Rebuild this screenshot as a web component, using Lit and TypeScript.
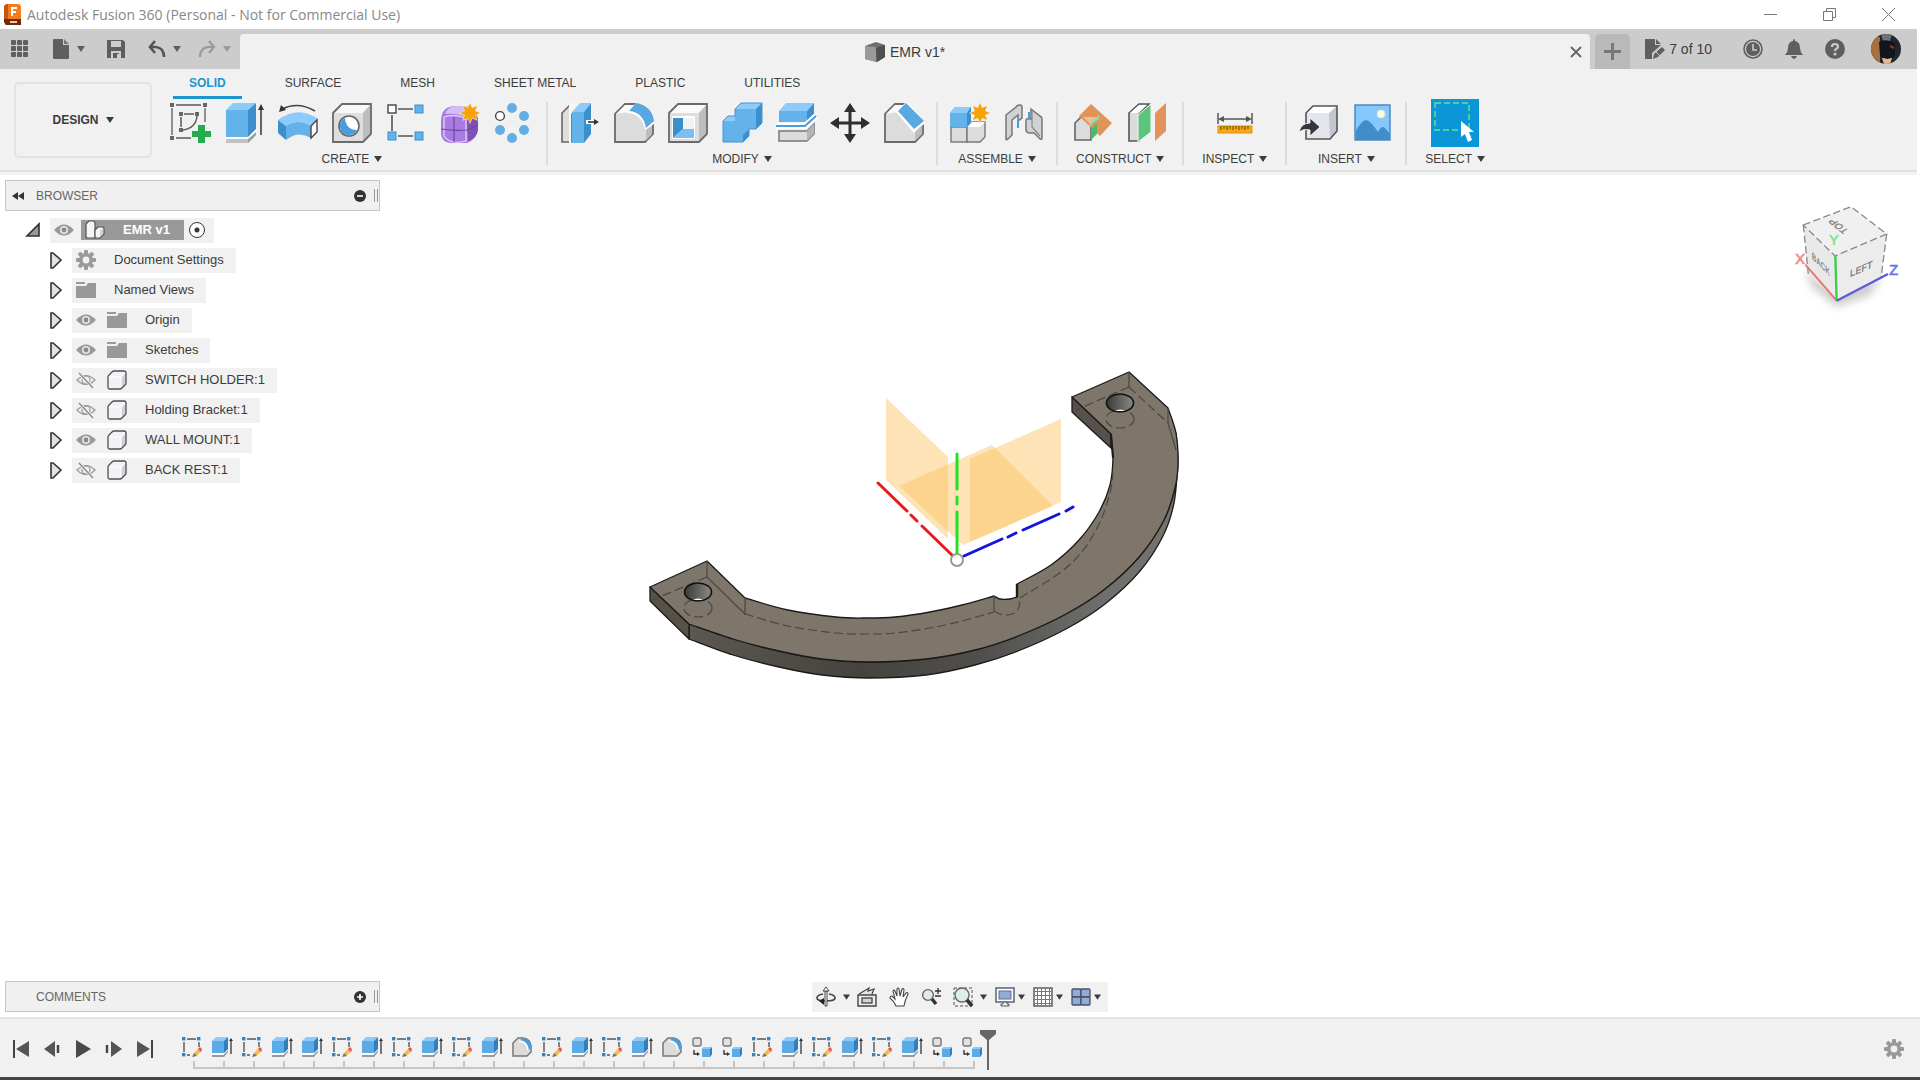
import { LitElement, html, css, svg, nothing } from "lit";
import { customElement, state } from "lit/decorators.js";
import { classMap } from "lit/directives/class-map.js";

type Art = ReturnType<typeof svg>;
type Point = [number, number];

/* ---------- drawing helpers ---------- */

const line = (points: Point[]): string =>
  points.map((p, i) => `${i ? "L" : "M"}${p[0]} ${p[1]}`).join("");

// Smooth curve through every point (Catmull-Rom turned into cubic segments).
const curve = (points: Point[], start = "M"): string => {
  let d = `${start}${points[0][0]} ${points[0][1]}`;
  for (let i = 0; i < points.length - 1; i++) {
    const a = points[i - 1] ?? points[i];
    const b = points[i];
    const c = points[i + 1];
    const e = points[i + 2] ?? c;
    d += `C${b[0] + (c[0] - a[0]) / 6} ${b[1] + (c[1] - a[1]) / 6} ${c[0] - (e[0] - b[0]) / 6} ${c[1] - (e[1] - b[1]) / 6} ${c[0]} ${c[1]}`;
  }
  return d;
};

const burst = (cx: number, cy: number, r: number): string => {
  const pts: Point[] = [];
  for (let i = 0; i < 16; i++) {
    const a = (Math.PI * i) / 8;
    const q = i % 2 ? r * 0.55 : r;
    pts.push([cx + q * Math.sin(a), cy - q * Math.cos(a)]);
  }
  return line(pts) + "Z";
};

const gearArt = svg`
  <g fill="#999">
    ${[0, 45, 90, 135].map((a) => svg`<rect x="8" y="0" width="4" height="20" rx="1" transform="rotate(${a} 10 10)"/>`)}
    <circle cx="10" cy="10" r="7"/>
  </g>
  <circle cx="10" cy="10" r="3.4" fill="#f1f1f1"/>`;

const solidBlock = svg`
  <path d="M1 6L6 1H18L19 2V14L14 19H2L1 18Z" fill="#f2f2f5"/>
  <path d="M14 7L19 2V14L14 19Z" fill="#cfd2da"/>
  <path d="M2 7H14V18M14 7L18 3" fill="none" stroke="#fff" stroke-width="1.2"/>
  <path d="M1 7Q1 6 2 5L5 2Q6 1 7 1H17Q19 1 19 3V13Q19 14 18 15L15 18Q14 19 13 19H3Q1 19 1 17Z" fill="none" stroke="#505050" stroke-width="1.3"/>`;

const sketchNode = (x: number, y: number) => svg`<rect x=${x - 2} y=${y - 2} width="4" height="4" fill="#666"/>`;

/* ---------- ribbon icons, 40 x 40 ---------- */

const tools: Record<string, Art> = {
  sketch: svg`
    <path d="M6 2H31M2 5V32M6 35H21M35 5V19" fill="none" stroke="#5a5a5a" stroke-width="1.3"/>
    <path d="M14 11H24M11 14V24M27 13Q26 25 13 27" fill="none" stroke="#5a5a5a" stroke-width="1.5"/>
    ${[[2, 2], [35, 2], [2, 35], [11, 11], [27, 11], [11, 27]].map((p) => sketchNode(p[0], p[1]))}
    <path d="M28 22H35V28H41V34H35V40H28V34H22V28H28Z" fill="#26ab4f"/>`,
  extrude: svg`
    <path d="M2 36H24L32 28V32L24 40H2Z" fill="#c2c2c2"/>
    <path d="M24 36L32 28V32L24 40Z" fill="#9c9c9c"/>
    <path d="M2 34H24L32 26V29L24 36H2Z" fill="#fff"/>
    <rect x="2" y="7" width="22" height="27" fill="#64b2ea"/>
    <path d="M2 7L9 0H32L24 7Z" fill="#8ccbfb"/>
    <path d="M24 7L32 0V26L24 34Z" fill="#3d8fcc"/>
    <path d="M37 32V4" stroke="#333" stroke-width="1.5"/><path d="M34 7L37 1L40 7Z" fill="#333"/>`,
  revolve: svg`
    <path d="M4 6Q20 -2 37 8" fill="none" stroke="#444" stroke-width="1.6"/><path d="M1 9L3 2L8 7Z" fill="#333"/>
    <path d="M0 17Q20 2 40 16L33 23Q20 15 8 23Z" fill="#8ccbfb"/>
    <path d="M0 17L8 23V37L0 30Z" fill="#3d8fcc"/>
    <path d="M8 23Q20 15 33 23V35Q20 27 8 37Z" fill="#64b2ea"/>
    <path d="M33 23L39 17V29L33 35Z" fill="#fff" stroke="#444" stroke-width="1.4"/>`,
  hole: svg`
    <path d="M1 10L10 1H39V31L31 39H1Z" fill="#dedede"/>
    <path d="M1 10L10 1H39L31 10Z" fill="#f7f7f7"/><path d="M31 10L39 1V31L31 39Z" fill="#bdbdbd"/>
    <path d="M1 10L10 1H39V31L31 39H1Z" fill="none" stroke="#6a6a6a" stroke-width="1.8"/>
    <circle cx="17" cy="23" r="10" fill="#fff" stroke="#666" stroke-width="1.6"/>
    <path d="M13 15A9 9 0 1 0 25 27Q14 27 13 15Z" fill="#4a9ddb"/>`,
  pattern: svg`
    <path d="M6 12V28M12 6H27M12 33H27" stroke="#555" stroke-width="1.6"/>
    <rect x="2" y="2" width="8" height="8" fill="#fff" stroke="#444" stroke-width="1.4"/>
    ${[[29, 2], [2, 29], [29, 29]].map((p) => svg`<rect x=${p[0]} y=${p[1]} width="8" height="8" fill="#64b2ea" stroke="#3d8fcc"/>`)}`,
  form: svg`
    <path d="M1 18Q1 3 16 3H26Q38 5 38 19V27Q37 36 27 40H12Q1 40 1 29Z" fill="#a97be0"/>
    <path d="M5 11Q8 3 17 3H27Q35 5 37 12L28 14Q16 10 5 11Z" fill="#d3bdf3"/>
    <path d="M27 17L38 15V27Q36 36 28 38Z" fill="#7d51b8"/>
    <path d="M4 14Q15 11 26 15V38Q10 42 4 33Z" fill="none" stroke="#e5d8f8" stroke-width="1.2"/>
    <path d="M14 14V39M1 26Q15 28 27 27L38 22" fill="none" stroke="#6d45a5" stroke-width="1.2"/>
    <path d=${burst(30, 10, 11)} fill="#f2f2f2"/><path d=${burst(30, 10, 10)} fill="#f9a208"/>`,
  circular: svg`
    ${[[18, 5], [30, 13], [30, 27], [18, 35], [6, 27]].map((p) => svg`<circle cx=${p[0]} cy=${p[1]} r="5" fill="#62aee4"/>`)}
    <circle cx="6" cy="13" r="4.4" fill="#fff" stroke="#444" stroke-width="1.4"/>`,
  press: svg`
    <path d="M2 10L11 1H16L11 10V39H2Z" fill="#dedede" stroke="#666" stroke-width="1.6"/>
    <path d="M9 0H20L11 11V40H9Z" fill="#f6f6f6"/>
    <rect x="12" y="9" width="12" height="31" fill="#64b2ea"/><path d="M12 9L20 0H31L24 9Z" fill="#8ccbfb"/>
    <path d="M24 9L31 0V31L24 40Z" fill="#3d8fcc"/>
    <path d="M26 19H35" stroke="#fff" stroke-width="4"/><path d="M28 19H35" stroke="#333" stroke-width="1.6"/><path d="M34 16L39 19L34 22Z" fill="#333"/>`,
  fillet: svg`
    <path d="M1 11L11 1H22Q38 4 39 21V31L31 39H1Z" fill="#dcdcdc" stroke="#6a6a6a" stroke-width="1.8"/>
    <path d="M2 11L11 2H20L14 9Z" fill="#fafafa"/>
    <path d="M12 10Q28 10 31 27L40 21Q39 3 22 0Z" fill="#fff"/>
    <path d="M15 8Q29 9 32 25L40 18Q38 3 22 0Z" fill="#58a9e2"/>
    <path d="M32 27L38 23V31L32 38Z" fill="#bdbdbd"/>`,
  shell: svg`
    <path d="M1 10L10 1H39V31L31 39H1Z" fill="#dedede"/>
    <path d="M1 10L10 1H39L31 10Z" fill="#fafafa"/><path d="M31 10L39 1V31L31 39Z" fill="#bdbdbd"/>
    <path d="M1 10L10 1H39V31L31 39H1Z" fill="none" stroke="#6a6a6a" stroke-width="1.8"/>
    <rect x="4" y="13" width="23" height="23" fill="#fff"/>
    <path d="M5 15H15V26L5 35Z" fill="#3d8fcc"/><path d="M5 35L15 26H26V35Z" fill="#7cc0f3"/><path d="M15 15H26V26H15Z" fill="#eef3f7"/>`,
  combine: svg`
    <path d="M1 39V18L6 13H13V6L19 0H40V20L34 26H27V33L21 39Z" fill="#64b2ea"/>
    <path d="M13 6L19 0H40L34 6ZM1 18L6 13H13V18Z" fill="#8ccbfb"/>
    <path d="M34 6L40 0V20L34 26ZM21 32L27 26V33L21 39Z" fill="#3d8fcc"/>
    <path d="M1 39V18L6 13H13V6L19 0H40V20L34 26H27V33L21 39Z" fill="none" stroke="#4595d2" stroke-width="1"/>`,
  split: svg`
    <path d="M3 28H31L38 21V31L31 38H3Z" fill="#dcdcdc" stroke="#777" stroke-width="1.5"/>
    <path d="M31 28L38 21V31L31 38Z" fill="#b5b5b5"/>
    <path d="M3 8H31V19H3Z" fill="#64b2ea"/><path d="M3 8L10 0H38L31 8Z" fill="#8ccbfb"/><path d="M31 8L38 0V12L31 19Z" fill="#3d8fcc"/>
    <path d="M0 23H29L40 13" fill="none" stroke="#fff" stroke-width="6"/><path d="M0 23H29L40 13" fill="none" stroke="#4a9ddb" stroke-width="2"/>`,
  move: svg`
    <path d="M20 7V33M7 20H33" stroke="#2f2f2f" stroke-width="3"/>
    <path d="M20 0L26 9H14ZM20 40L26 31H14ZM0 20L9 14V26ZM40 20L31 14V26Z" fill="#2f2f2f"/>`,
  chamfer: svg`
    <path d="M1 11L11 1H22L39 19V31L31 39H1Z" fill="#dcdcdc" stroke="#6a6a6a" stroke-width="1.8"/>
    <path d="M2 11L11 2H20L13 9Z" fill="#fafafa"/>
    <path d="M12 9L21 0H24L40 18V21L30 30Z" fill="#fff"/>
    <path d="M14 8L22 0L40 18L30 26Z" fill="#58a9e2"/>
    <path d="M31 29L38 22V31L31 38Z" fill="#bdbdbd"/>`,
  component: svg`
    <rect x="1" y="24" width="16" height="15" fill="#dcdcdc" stroke="#777" stroke-width="1.4"/>
    <path d="M17 24L22 19H35V34L30 39H17Z" fill="#dcdcdc" stroke="#777" stroke-width="1.4"/>
    <path d="M17 24L22 19H35L30 24Z" fill="#fff"/>
    <path d="M0 10L5 4H21V19L17 24H0Z" fill="#64b2ea"/><path d="M0 10L5 4H21L17 10Z" fill="#8ccbfb"/><path d="M17 10L21 4V19L17 24Z" fill="#3d8fcc"/>
    <path d=${burst(30, 10, 11)} fill="#f2f2f2"/><path d=${burst(30, 10, 10)} fill="#f9a208"/>`,
  joint: svg`
    <path d="M2 36V12L12 4Q13 2 16 2Q18 2 18 4V15L14 18V12L8 17V32L5 35Q2 38 2 36Z" fill="#d2d2d2" stroke="#777" stroke-width="1.5"/>
    <path d="M27 6L36 13Q38 14 38 16V35Q38 37 36 36L30 30H25Q22 29 22 27V17Q24 14 27 16Z" fill="#d2d2d2" stroke="#777" stroke-width="1.5"/>
    <path d="M28 8V24L36 33" fill="none" stroke="#888" stroke-width="1.2"/>
    <path d="M14 17V25M25 9V17" stroke="#4a9ddb" stroke-width="2"/>`,
  offsetPlane: svg`
    <path d="M2 37V20L9 13H23L18 20V37Z" fill="#dcdcdc" stroke="#666" stroke-width="1.6"/>
    <path d="M18 1L39 20L27 33L6 13Z" fill="#e2935a"/>
    <path d="M10 14H24L18 22Z" fill="#e6c09f"/>
    <path d="M18 26L24 20V31L18 37Z" fill="#48bd6e"/>
    <path d="M16 23L26 13M20 19L26 15" stroke="#8fdca8" stroke-width="2"/>`,
  midPlane: svg`
    <path d="M2 10L12 1H22L12 11V38H2Z" fill="#dcdcdc" stroke="#555" stroke-width="1.6"/>
    <path d="M3 10L12 2H20L11 10Z" fill="#fff"/>
    <path d="M11 12L24 1V29L11 39Z" fill="#5cc47e" stroke="#f6f6f6" stroke-width="1"/>
    <path d="M28 10L39 0V28L28 38Z" fill="#e2935a"/>`,
  measure: svg`
    <path d="M3 10V21M37 10V21M6 16H34" stroke="#555" stroke-width="1.5"/><path d="M3 16L9 13V19ZM37 16L31 13V19Z" fill="#555"/>
    <rect x="3" y="23" width="34" height="7" fill="#f7a713" stroke="#e0930b"/>
    <path d="M6 23V27M9 23V26M12 23V27M15 23V26M18 23V27M21 23V26M24 23V27M27 23V26M30 23V27M33 23V26" stroke="#65460a"/>`,
  derive: svg`
    <path d="M7 10L14 3H38V28L31 36H7Z" fill="#e4e5ea"/><path d="M7 10L14 3H38L30 10Z" fill="#fff"/><path d="M30 10L38 3V28L31 36Z" fill="#c3c6cf"/>
    <path d="M7 10L14 3H38V28L31 36H7Z" fill="none" stroke="#555" stroke-width="1.6"/>
    <path d="M0 29Q2 20 11 20V15L21 24L11 33V27Q5 25 0 29Z" fill="#333740" stroke="#fff" stroke-width="0.8"/>`,
  canvas: svg`
    <rect x="2" y="2" width="35" height="35" fill="#86c8fb" stroke="#3f86bb" stroke-width="1.4"/>
    <path d="M3 28Q8 18 13 17Q17 17 25 29Q29 22 32 25L37 31V37H3Z" fill="#3f8ecb"/>
    <circle cx="28" cy="11" r="4" fill="#fbfbe6" stroke="#e1ecc2"/>`,
};

/* ---------- 20 x 20 icons ---------- */

const small: Record<string, Art> = {
  apps: svg`${[1, 7, 13].map((y) => [1, 7, 13].map((x) => svg`<rect x=${x} y=${y} width="5" height="5" rx="1" fill="#5f5f5f"/>`))}`,
  file: svg`<path d="M2 1Q2 0 3 0H12V6H18V19Q18 20 17 20H3Q2 20 2 19Z" fill="#5f5f5f"/><path d="M13 0L18 5H13Z" fill="#777"/>`,
  save: svg`<path d="M1 1H17L19 3V19H1Z" fill="#5f5f5f"/><path d="M5 2H15V8H5Z" fill="#ccc"/><path d="M6 2H9V6H6ZM5 12H15V19H5Z" fill="#ccc"/><path d="M7 14H13V19H7Z" fill="#5f5f5f"/><path d="M11 15H13V19H11Z" fill="#ccc"/>`,
  undo: svg`<path d="M8 2L3 8L8 14M3 8H9Q17 9 17 18" fill="none" stroke="#555" stroke-width="2.6"/>`,
  redo: svg`<path d="M12 2L17 8L12 14M17 8H11Q3 9 3 18" fill="none" stroke="#999" stroke-width="2.2"/>`,
  box: svg`<path d="M0 4L11 0L20 3V15L12 20L0 17Z" fill="#6d6d6d"/><path d="M0 4L11 5V20L0 17Z" fill="#999"/><path d="M11 6L20 3V15L12 20Z" fill="#4f4f4f"/>`,
  jobs: svg`<path d="M0 0H10V6H16L7 14V20H0Z" fill="#5f5f5f"/><path d="M11 0L16 5H11Z" fill="#5f5f5f"/><path d="M8 20L9 15L17 8L20 11L13 18Z" fill="#5f5f5f"/><path d="M11 13L15 17" stroke="#ccc"/>`,
  clock: svg`<circle cx="10" cy="10" r="9" fill="none" stroke="#5f5f5f" stroke-width="1.6"/><circle cx="10" cy="10" r="7" fill="#5f5f5f"/><path d="M10 5V11H14" fill="none" stroke="#ccc" stroke-width="1.6"/>`,
  bell: svg`<path d="M10 0Q11 0 11 2Q16 3 16 9Q16 13 19 16H1Q4 13 4 9Q4 3 9 2Q9 0 10 0Z" fill="#5f5f5f"/><path d="M7 17H13Q12 20 10 20Q8 20 7 17Z" fill="#5f5f5f"/>`,
  help: svg`<circle cx="10" cy="10" r="10" fill="#5f5f5f"/><path d="M7 8Q7 5 10 5Q13 5 13 8Q13 9 11 10Q10 11 10 12" fill="none" stroke="#ccc" stroke-width="2.2"/><circle cx="10" cy="15" r="1.5" fill="#ccc"/>`,
  eye: svg`<path d="M0 10Q10 -1 20 10Q10 21 0 10Z" fill="#999"/><circle cx="10" cy="10" r="4" fill="#e6e6e6"/><circle cx="10" cy="10" r="2.4" fill="#8a8a8a"/>`,
  eyeOff: svg`<path d="M1 10Q10 1 19 10Q10 19 1 10Z" fill="none" stroke="#999" stroke-width="1.2"/><circle cx="10" cy="10" r="4" fill="none" stroke="#999" stroke-width="1.2"/><path d="M3 3L17 18" stroke="#f1f1f1" stroke-width="3"/><path d="M3 3L17 18" stroke="#888" stroke-width="1.3"/>`,
  folder: svg`<path d="M0 2H9V4H0ZM0 6H10L12 3H20V18H0Z" fill="#999"/>`,
  gear: gearArt,
  block: solidBlock,
  assembly: svg`<path d="M1 4L4 1H9L10 3V18H2L1 17Z" fill="#f5f5f7" stroke="#555" stroke-width="1.2"/><path d="M10 10L13 7H18L19 8V14L15 18H10Z" fill="#f5f5f7" stroke="#555" stroke-width="1.2"/><path d="M15 11L18 8V14L15 17Z" fill="#cfd2da"/>`,
  toStart: svg`<path d="M3 1V19" stroke="#444" stroke-width="2"/><path d="M18 2V18L5 10Z" fill="#555"/>`,
  back: svg`<path d="M13 2V18L2 10Z" fill="#555"/><path d="M16 6V14" stroke="#444" stroke-width="2.4"/>`,
  play: svg`<path d="M3 1V19L18 10Z" fill="#4a4a4a"/>`,
  forward: svg`<path d="M7 2V18L18 10Z" fill="#555"/><path d="M3 6V14" stroke="#444" stroke-width="2.4"/>`,
  toEnd: svg`<path d="M17 1V19" stroke="#444" stroke-width="2"/><path d="M2 2V18L15 10Z" fill="#555"/>`,
  tSketch: svg`
    <path d="M5 2H14M2 5V15M17 5V10M5 18H8" stroke="#555" stroke-width="1.4"/>
    ${[[0, 0], [15, 0], [0, 16]].map((p) => svg`<rect x=${p[0]} y=${p[1]} width="3.4" height="3.4" fill="#2e86c8"/>`)}
    <path d="M12 16L17 11L20 14L14 19Z" fill="#f5bb4b"/><path d="M16 12L18 10L20 12L19 15Z" fill="#ef5350"/><path d="M10 20L12 16L15 19Z" fill="#777"/>`,
  tExtrude: svg`
    <path d="M0 18H11L16 13V15L12 20H0Z" fill="#999"/><path d="M0 16H11L16 11V13L11 18H0Z" fill="#fff"/>
    <rect x="0" y="4" width="12" height="12" fill="#5aabe6"/><path d="M0 4L4 0H16L12 4Z" fill="#8ccbfb"/><path d="M12 4L16 0V12L12 16Z" fill="#2f7fbd"/>
    <path d="M19 17V3" stroke="#333" stroke-width="1.3"/><path d="M17 4L19 1L21 4Z" fill="#333"/>`,
  tFillet: svg`
    <path d="M1 6L6 1H11Q19 2 19 10V15L15 19H1Z" fill="#dcdcdc" stroke="#777" stroke-width="1.5"/>
    <path d="M7 4Q15 5 16 13" fill="none" stroke="#fff" stroke-width="1.4"/>
    <path d="M8 3Q16 4 17 13L20 10Q19 2 11 1Z" fill="#4a9ddb"/>`,
  tComponent: svg`
    <rect x="1" y="1" width="8" height="8" rx="2" fill="#e2e2e2" stroke="#777" stroke-width="1.4"/>
    <path d="M2 13V17H5" fill="none" stroke="#333" stroke-width="1.4"/><path d="M5 15L8 17L5 19Z" fill="#333"/>
    <path d="M10 12L12 10H20V17L18 20H10Z" fill="#5aabe6"/><path d="M18 12L20 10V17L18 20Z" fill="#2f7fbd"/><path d="M10 12L12 10H20L18 12Z" fill="#8ccbfb"/>`,
  orbit: svg`<path d="M7 7Q1 8 1 11Q1 14 10 14Q19 14 19 11Q19 8 13 7" fill="none" stroke="#444" stroke-width="1.7"/><path d="M9 4H11V19H9Z" fill="#fff" stroke="#444"/><path d="M7 4L10 0L13 4Z" fill="#fff" stroke="#333" stroke-width="0.9"/><path d="M8 11V18L3 14Z" fill="#222"/>`,
  look: svg`<path d="M1 8H19V19H1Z" fill="#eee" stroke="#444" stroke-width="1.4"/><rect x="5" y="11" width="10" height="5" fill="#cfd4dc" stroke="#444" stroke-width="1.3"/><path d="M2 7L12 1L11 4L17 2L15 7" fill="#e6e6e6" stroke="#444" stroke-width="1.2"/>`,
  hand: svg`<path d="M7 19Q5 14 1 11Q1 9 3 9L6 12L4 4Q5 2 6 4L8 9V2Q9 0 10 2L11 9L13 2Q15 1 15 3L14 10L17 6Q19 5 19 7Q16 13 15 19Z" fill="#fff" stroke="#444" stroke-width="1.1"/>`,
  zoom: svg`<circle cx="7" cy="8" r="5.4" fill="#dfeaf0" stroke="#666" stroke-width="1.4"/><path d="M11 12L15 17" stroke="#333" stroke-width="3.4"/><path d="M14 4H20M17 1V7M14 9H20" stroke="#333" stroke-width="1.3"/>`,
  fit: svg`<rect x="1" y="1" width="18" height="18" fill="none" stroke="#555" stroke-dasharray="3 2"/><circle cx="9" cy="8" r="7" fill="#dceee9" stroke="#666" stroke-width="1.4"/><path d="M14 13L19 19" stroke="#333" stroke-width="3.6"/>`,
  display: svg`<rect x="1" y="1" width="18" height="14" fill="#fff" stroke="#4d5870" stroke-width="1.4"/><rect x="4" y="4" width="12" height="8" fill="#93acd6" stroke="#5a6f97"/><path d="M8 15H12V17H14V19H6V17H8Z" fill="#eee" stroke="#555"/>`,
  grid: svg`<rect x="1" y="1" width="18" height="18" fill="#fff" stroke="#555" stroke-width="1.4"/><path d="M4.5 1V19M8.5 1V19M12.5 1V19M16.5 1V19M1 4.5H19M1 8.5H19M1 12.5H19M1 16.5H19" stroke="#777"/>`,
  views: svg`${[[1, 2], [10, 2], [1, 10], [10, 10]].map((p) => svg`<rect x=${p[0]} y=${p[1]} width="9" height="8" rx="1" fill="#93acd6" stroke="#44506a" stroke-width="1.3"/>`)}`,
};

const icon = (name: string, size = 20) =>
  html`<svg class="icon" width=${size} height=${size} viewBox="0 0 ${size} ${size}" aria-hidden="true">${size === 40 ? tools[name] : small[name]}</svg>`;

const caret = html`<svg class="icon caret" width="8" height="6" viewBox="0 0 8 6" aria-hidden="true"><path d="M0 0H8L4 6Z" fill="currentColor"/></svg>`;

/* ---------- data ---------- */

const workspaces = ["SOLID", "SURFACE", "MESH", "SHEET METAL", "PLASTIC", "UTILITIES"];

const groups: { label: string; items: [string, string][] }[] = [
  {
    label: "CREATE",
    items: [["sketch", "Create Sketch"], ["extrude", "Extrude"], ["revolve", "Revolve"], ["hole", "Hole"], ["pattern", "Rectangular Pattern"], ["form", "Create Form"], ["circular", "Circular Pattern"]],
  },
  {
    label: "MODIFY",
    items: [["press", "Press Pull"], ["fillet", "Fillet"], ["shell", "Shell"], ["combine", "Combine"], ["split", "Split Body"], ["move", "Move"], ["chamfer", "Chamfer"]],
  },
  { label: "ASSEMBLE", items: [["component", "New Component"], ["joint", "Joint"]] },
  { label: "CONSTRUCT", items: [["offsetPlane", "Offset Plane"], ["midPlane", "Midplane"]] },
  { label: "INSPECT", items: [["measure", "Measure"]] },
  { label: "INSERT", items: [["derive", "Insert Derive"], ["canvas", "Canvas"]] },
];

interface TreeNode {
  label: string;
  glyph: string;
  visible?: boolean;
}

const nodes: TreeNode[] = [
  { label: "Document Settings", glyph: "gear" },
  { label: "Named Views", glyph: "folder" },
  { label: "Origin", glyph: "folder", visible: true },
  { label: "Sketches", glyph: "folder", visible: true },
  { label: "SWITCH HOLDER:1", glyph: "block", visible: false },
  { label: "Holding Bracket:1", glyph: "block", visible: false },
  { label: "WALL MOUNT:1", glyph: "block", visible: true },
  { label: "BACK REST:1", glyph: "block", visible: false },
];

const featureKinds: Record<string, [string, string]> = {
  s: ["tSketch", "Sketch"],
  e: ["tExtrude", "Extrude"],
  f: ["tFillet", "Fillet"],
  c: ["tComponent", "Component"],
};
const history = [..."seseesesesefsesefccsesesecc"];

const playback: [string, string][] = [
  ["toStart", "Go to beginning"],
  ["back", "Step back"],
  ["play", "Play"],
  ["forward", "Step forward"],
  ["toEnd", "Go to end"],
];

/* ---------- model view ---------- */

const innerLeft: Point[] = [[745, 598], [788, 610], [836, 617], [867, 618], [895, 617], [930, 612], [962, 605], [994, 596]];
const notch: Point[] = [[994, 596], [1000, 599], [1010, 599], [1017, 597]];
const innerRight: Point[] = [[1017, 584], [1051, 565], [1079, 540], [1099, 512], [1110, 485], [1113, 457], [1111, 434]];
const outer: Point[] = [[1168, 408], [1176, 433], [1178, 463], [1175, 488], [1164, 520], [1140, 556], [1105, 589], [1066, 614], [1018, 636], [975, 650], [926, 659], [869, 662], [822, 659], [779, 651], [733, 639], [689, 624]];
const rim: Point[] = [[689, 639], [733, 655], [779, 667], [822, 675], [869, 678], [926, 675], [975, 665], [1018, 651], [1066, 629], [1105, 604], [1140, 571], [1163, 536], [1174, 503], [1178, 463]];

const topFace =
  line([[650, 587], [707, 561]]) +
  curve(innerLeft, "L") +
  curve(notch, "L") +
  curve(innerRight, "L") +
  "L1072 397L1129 372" +
  curve(outer, "L") +
  "Z";
const sideFace = curve([...outer].reverse().slice(0, 15)) + "L1178 463" + curve([...rim].reverse(), "L") + "Z";

@customElement("model-view")
export class ModelView extends LitElement {
  static styles = css`
    :host {
      display: block;
    }
    .scene {
      display: block;
      width: 100%;
      height: 100%;
    }
  `;

  render() {
    return html`<svg class="scene" viewBox="0 175 1920 842" role="img" aria-label="Wall mount bracket with origin planes">
      <defs>
        <linearGradient id="side" x1="0" x2="1" y1="0" y2="0">
          <stop offset="0" stop-color="#5c5850" /><stop offset="0.35" stop-color="#46433f" />
          <stop offset="0.6" stop-color="#504f4c" /><stop offset="0.85" stop-color="#6f6f6e" /><stop offset="1" stop-color="#77736c" />
        </linearGradient>
        <linearGradient id="bore"><stop offset="0" stop-color="#3c3a37" /><stop offset="1" stop-color="#8b8983" /></linearGradient>
      </defs>
      <g fill="#fac05e" fill-opacity="0.45">
        <path d="M886 398L948 457V539L886 480Z" />
        <path d="M899 486L992 445L1053 506L963 545Z" />
        <path d="M970 459L1061 419V502L970 542Z" />
      </g>
      <g stroke-width="3" stroke-linecap="round">
        <path d="M878 483L907 511M911 515L917 521M922 526L953 556" stroke="#e81b1b" />
        <path d="M957 454V489M957 497V504M957 512V554" stroke="#22e322" />
        <path d="M964 556L1002 539M1008 537L1016 533M1023 530L1059 514M1066 511L1073 507" stroke="#1414dc" />
      </g>
      <circle cx="957" cy="560" r="6" fill="#fff" stroke="#999" stroke-width="2" />
      <g stroke="#1c1b19" stroke-width="1.3" stroke-linejoin="round">
        <path d=${sideFace} fill="url(#side)" />
        <path d="M650 587V601L689 639V624Z" fill="#56524b" />
        <path d="M1072 397V412L1111 448V434Z" fill="#56524b" />
        <path d=${topFace} fill="#7e766a" />
        <path d="M1017 584V597" fill="none" stroke-width="2.4" />
        <path d="M1111 434L1112 448L1113 458" fill="none" stroke-width="2" />
      </g>
      <g fill="none" stroke="#4c4740" stroke-width="1.2">
        <path d="M707 561V577L745 614V598M994 596V611M1129 372V387M1168 408V423L1176 450" />
        <g stroke-dasharray="9 4">
          <path d=${curve(innerLeft.map(([x, y]): Point => [x, y + 16]))} />
          <path d=${curve([[1020, 598], [1061, 572], [1084, 549], [1100, 522], [1110, 493], [1113, 474]])} />
          <path d="M707 577L662 596L650 601M1129 387L1076 410M1129 387L1168 423" />
          <path d="M994 611Q1004 618 1015 613Q1022 606 1018 598" />
          <ellipse cx="698" cy="608" rx="14" ry="9" /><ellipse cx="1120" cy="419" rx="14" ry="9" />
        </g>
      </g>
      ${[[698, 592], [1120, 403]].map(
        ([x, y]) => svg`<ellipse cx=${x} cy=${y} rx="13.5" ry="9" fill="url(#bore)" stroke="#111" stroke-width="1.6"/>
          <path d="M${x - 5} ${y + 8}Q${x} ${y + 5} ${x + 5} ${y + 8}Z" fill="#fff"/>`
      )}
    </svg>`;
  }
}

@customElement("view-cube")
export class ViewCube extends LitElement {
  static styles = css`
    :host {
      display: block;
    }
    .cube {
      display: block;
    }
    .face {
      font: bold 31px "Liberation Sans", Arial, sans-serif;
      fill: #858585;
    }
    .axis {
      font: 44px "Liberation Sans", Arial, sans-serif;
      stroke-width: 2px;
    }
  `;

  render() {
    return html`<svg class="cube" width="130" height="130" viewBox="0 0 390 390" role="img" aria-label="View cube">
      <defs><filter id="soft" x="-20%" y="-20%" width="140%" height="140%"><feGaussianBlur stdDeviation="13" /></filter></defs>
      <path d="M75 240L170 300L305 262L270 315L170 350L95 290Z" fill="#9a9a9a" opacity="0.5" filter="url(#soft)" />
      <path d="M70 105L213 50L320 132L165 198Z" fill="#f0f0f0" />
      <path d="M70 105L165 198L170 332L85 252Z" fill="#e9e9e9" />
      <path d="M165 198L320 132L303 265L170 332Z" fill="#ececec" />
      <g fill="none" stroke="#8a8a8a" stroke-width="4" stroke-dasharray="22 10">
        <path d="M70 105L213 50L320 132L165 198Z" /><path d="M70 105L85 252" /><path d="M320 132L303 265" />
      </g>
      <text class="face" transform="matrix(-0.75 -0.6 0.85 -0.5 208 122)">TOP</text>
      <text class="face" transform="matrix(0.6 0.6 0.05 1 96 206)">BACK</text>
      <text class="face" transform="matrix(0.88 -0.38 -0.06 1 209 262)">LEFT</text>
      <path d="M170 332L76 224" stroke="#ea7474" stroke-width="6" />
      <path d="M170 332L166 196" stroke="#38d048" stroke-width="7" />
      <path d="M170 332L324 252" stroke="#5c5cd8" stroke-width="7" />
      <text class="axis" x="46" y="222" fill="#f08888" stroke="#f08888">X</text>
      <text class="axis" x="147" y="166" fill="#7be98a" stroke="#7be98a">Y</text>
      <text class="axis" x="328" y="256" fill="#7070e6" stroke="#7070e6">Z</text>
    </svg>`;
  }
}

/* ---------- application ---------- */

@customElement("app-root")
export class AppRoot extends LitElement {
  @state() private activeTab = "SOLID";

  static styles = css`
    :host {
      display: flex;
      flex-direction: column;
      min-height: 100vh;
      background: #fff;
      color: #3c3c3c;
      font: 12px/16px "Liberation Sans", Arial, sans-serif;
    }
    * {
      box-sizing: border-box;
    }
    button {
      display: flex;
      align-items: center;
      justify-content: center;
      padding: 0;
      border: 0;
      background: none;
      color: inherit;
      font: inherit;
      cursor: pointer;
    }
    .icon {
      display: block;
      flex: none;
      overflow: visible;
    }
    .caret {
      width: 8px;
    }

    .titlebar {
      display: flex;
      align-items: center;
      height: 29px;
      padding: 0 25px 0 4px;
      color: #888;
      font: 14px/20px "Open Sans", "Noto Sans", sans-serif;
    }
    .titlebar .name {
      flex: 1;
      margin: 0 0 0 6px;
      font: inherit;
    }
    .window-controls {
      display: flex;
      gap: 46px;
    }

    .appbar {
      display: flex;
      height: 40px;
      margin-right: 3px;
      background: #ccc;
    }
    .quick {
      display: flex;
      align-items: center;
      gap: 21px;
      padding: 0 9px 0 10px;
      color: #5f5f5f;
    }
    .quick button,
    .history {
      display: flex;
      gap: 6px;
    }
    .history {
      gap: 16px;
    }
    .faded {
      color: #999;
    }
    .doc-tab {
      flex: 1;
      display: flex;
      align-items: center;
      margin-top: 5px;
      padding-right: 8px;
      border-radius: 4px 4px 0 0;
      background: #f1f1f1;
    }
    .doc-title {
      flex: 1;
      display: flex;
      align-items: center;
      justify-content: center;
      gap: 5px;
      font-size: 14px;
    }
    .new-tab {
      width: 35px;
      margin: 5px 15px 0 5px;
      border-radius: 5px 5px 0 0;
      background: #b9b9b9;
    }
    .account {
      display: flex;
      align-items: center;
      gap: 21px;
      padding-right: 16px;
    }
    .jobs {
      gap: 4px;
      margin-right: 10px;
      font-size: 14px;
    }
    .avatar {
      margin-left: 5px;
    }

    .ribbon {
      display: flex;
      margin-right: 3px;
      border-bottom: 2px solid #e2e2e2;
      background: #f1f1f1;
      box-shadow: 0 3px 0 #f3f3f3;
    }
    .workspace {
      gap: 7px;
      width: 138px;
      margin: 13px 6px 12px 14px;
      border: 2px solid #e2e2e2;
      border-radius: 5px;
      font-weight: bold;
    }
    .tabs {
      display: flex;
      gap: 27px;
      height: 30px;
      padding-left: 15px;
    }
    .tab {
      padding: 0 16px;
      border-bottom: 3px solid transparent;
    }
    .tab.active {
      border-color: #1b96cf;
      color: #1b96cf;
      font-weight: bold;
    }
    .groups {
      display: flex;
      height: 71px;
    }
    .group {
      display: flex;
      flex-direction: column;
    }
    .group + .group {
      position: relative;
      margin-left: 2px;
    }
    .group + .group::before {
      content: "";
      position: absolute;
      inset: 3px auto 5px -2px;
      width: 2px;
      background: #dcdcdc;
    }
    .tools {
      display: flex;
      align-items: center;
      justify-content: center;
      gap: 14px;
      height: 48px;
      padding: 0 12px;
    }
    .menu {
      gap: 5px;
      height: 23px;
      padding: 0 18px;
    }

    .stage {
      flex: 1;
      display: flex;
      flex-direction: column;
      justify-content: space-between;
      position: relative;
      margin-top: 3px;
      padding: 5px;
    }
    .model {
      position: absolute;
      inset: 0;
    }
    .upper,
    .lower {
      position: relative;
      display: flex;
      justify-content: space-between;
    }
    .lower {
      display: grid;
      grid-template-columns: 1fr auto 1fr;
      align-items: end;
    }
    .cube {
      margin: 10px 5px 0 0;
    }
    .panel {
      width: 375px;
    }
    .panel-head {
      display: flex;
      align-items: center;
      height: 31px;
      padding: 0 1px 0 6px;
      border: 1px solid #c6c6c6;
      background: #f0f0f0;
      color: #666;
    }
    .panel-head h2 {
      flex: 1;
      margin: 0 0 0 12px;
      font: inherit;
    }
    .slot {
      width: 12px;
    }
    .grip {
      width: 4px;
      height: 13px;
      margin-left: 8px;
      border: solid #999;
      border-width: 0 1px;
    }
    .tree {
      margin: 0;
      padding: 4px 0 0;
      list-style: none;
      font-size: 13px;
    }
    .row {
      display: flex;
      align-items: center;
      gap: 10px;
      height: 30px;
      padding-left: 45px;
    }
    .row.root {
      padding-left: 21px;
    }
    .node {
      display: flex;
      align-items: center;
      height: 25px;
      padding: 0 12px 0 4px;
      background: #f1f1f1;
    }
    .eye {
      margin-right: 11px;
    }
    .node .label {
      margin-left: 18px;
    }
    .root .node {
      padding-right: 9px;
    }
    .root .eye {
      margin-right: 7px;
    }
    .selected {
      display: flex;
      align-items: center;
      height: 20px;
      margin-right: 5px;
      padding: 0 14px 0 4px;
      background: #999;
      color: #fff;
      font-weight: bold;
    }
    .activate {
      appearance: none;
      width: 16px;
      height: 16px;
      margin: 0;
      border: 1px solid #333;
      border-radius: 50%;
      background: radial-gradient(circle, #333 2px, #fff 3px);
    }

    .nav {
      display: flex;
      align-items: center;
      gap: 8px;
      height: 30px;
      padding: 0 7px 0 4px;
      background: #f1f1f1;
    }
    .nav .caret {
      width: 7px;
    }
    .nav button {
      gap: 3px;
    }
    .nav .wide {
      gap: 7px;
    }
    .nav-main {
      display: flex;
      gap: 12px;
    }
    .nav-main .wide:first-child {
      margin-right: -5px;
    }

    .timeline {
      display: flex;
      height: 63px;
      border-top: 2px solid #e3e3e3;
      border-bottom: 3px solid #454545;
      background: #f1f1f1;
    }
    .playback {
      display: flex;
      align-items: center;
      gap: 11px;
      padding: 2px 24px 0 11px;
    }
    .features {
      display: flex;
      margin: 0;
      padding: 18px 0 0;
      list-style: none;
    }
    .feature {
      width: 30px;
      padding-left: 3px;
    }
    .tick {
      width: 32px;
      height: 8px;
      margin: 4px 0 0 11px;
      border: solid #c6c6c6;
      border-width: 0 0 2px 2px;
    }
    .feature:last-child .tick {
      width: 2px;
    }
    .marker {
      margin: 11px 0 0 -9px;
    }
    .settings {
      margin: 2px 16px 0 auto;
    }
  `;

  private renderTitle() {
    return html`<header class="titlebar">
      <svg class="icon" width="17" height="21" viewBox="0 0 17 21" aria-hidden="true">
        <path d="M2 0H14L17 3V21H2L0 18V2Z" fill="#c8520f" /><path d="M4 0H15L17 2V15H4Z" fill="#f57c1c" /><path d="M0 15H17V21H2L0 18Z" fill="#6f2a08" />
        <path d="M8 12V4H13M8 8H12" fill="none" stroke="#fff" stroke-width="2" /><path d="M6 18H13" stroke="#e9c9b5" stroke-width="2" />
      </svg>
      <h1 class="name">Autodesk Fusion 360 (Personal - Not for Commercial Use)</h1>
      <div class="window-controls">
        <button aria-label="Minimize"><svg class="icon" width="13" height="13" viewBox="0 0 13 13"><path d="M0 6.5H13" stroke="#777" /></svg></button>
        <button aria-label="Restore"><svg class="icon" width="13" height="13" viewBox="0 0 13 13"><path d="M0.5 3.5H9.5V12.5H0.5ZM3.5 3.5V0.5H12.5V9.5H9.5" fill="none" stroke="#777" /></svg></button>
        <button aria-label="Close"><svg class="icon" width="13" height="13" viewBox="0 0 13 13"><path d="M0 0L13 13M13 0L0 13" stroke="#777" /></svg></button>
      </div>
    </header>`;
  }

  private renderAppBar() {
    return html`<div class="appbar">
      <div class="quick">
        <button aria-label="Show data panel">${icon("apps")}</button>
        <button aria-label="File">${icon("file")}${caret}</button>
        <button aria-label="Save">${icon("save")}</button>
        <div class="history">
          <button aria-label="Undo">${icon("undo")}${caret}</button>
          <button class="faded" aria-label="Redo">${icon("redo")}${caret}</button>
        </div>
      </div>
      <div class="doc-tab">
        <div class="doc-title">${icon("box")}<span>EMR v1*</span></div>
        <button aria-label="Close document"><svg class="icon" width="12" height="12" viewBox="0 0 12 12"><path d="M1 1L11 11M11 1L1 11" stroke="#6a6a6a" stroke-width="2" /></svg></button>
      </div>
      <button class="new-tab" aria-label="New design"><svg class="icon" width="17" height="17" viewBox="0 0 17 17"><path d="M8.5 0V17M0 8.5H17" stroke="#777" stroke-width="3" /></svg></button>
      <div class="account">
        <button class="jobs">${icon("jobs")}<span>7 of 10</span></button>
        <button aria-label="Job status">${icon("clock")}</button>
        <button aria-label="Notifications">${icon("bell")}</button>
        <button aria-label="Help">${icon("help")}</button>
        <button class="avatar" aria-label="Account">
          <svg class="icon" width="30" height="30" viewBox="0 0 30 30">
            <defs><clipPath id="round"><circle cx="15" cy="15" r="15" /></clipPath></defs>
            <g clip-path="url(#round)">
              <rect width="30" height="30" fill="#22262c" /><path d="M0 3H9V28H0Z" fill="#a8703f" /><path d="M11 24H21L19 30H13Z" fill="#e6b995" />
              <path d="M10 0H21L19 7H12Z" fill="#6f7377" /><path d="M8 8Q15 4 24 9V22Q16 28 9 22Z" fill="#12151b" /><path d="M19 12L23 14" stroke="#8b3a22" stroke-width="2" />
            </g>
          </svg>
        </button>
      </div>
    </div>`;
  }

  private renderRibbon() {
    return html`<div class="ribbon">
      <button class="workspace">DESIGN ${caret}</button>
      <div>
        <nav class="tabs">
          ${workspaces.map(
            (name) => html`<button class=${classMap({ tab: true, active: name === this.activeTab })} @click=${() => (this.activeTab = name)}>${name}</button>`
          )}
        </nav>
        <div class="groups">
          ${groups.map(
            (group) => html`<section class="group">
              <div class="tools">${group.items.map(([name, label]) => html`<button aria-label=${label}>${icon(name, 40)}</button>`)}</div>
              <button class="menu">${group.label}${caret}</button>
            </section>`
          )}
          <section class="group">
            <div class="tools">
              <button aria-label="Select">
                <svg class="icon" width="48" height="48" viewBox="0 0 48 48">
                  <rect width="48" height="48" fill="#0a96d7" /><rect x="4" y="4" width="34" height="27" fill="none" stroke="#6be08f" stroke-width="1.4" stroke-dasharray="6 3" />
                  <path d="M30 22L43 33H38L41 41L37 43L34 35L30 38Z" fill="#fff" />
                </svg>
              </button>
            </div>
            <button class="menu">SELECT${caret}</button>
          </section>
        </div>
      </div>
    </div>`;
  }

  private renderHead(title: string, open: boolean) {
    return html`<div class="panel-head">
      ${open
        ? html`<button aria-label="Collapse panel"><svg class="icon" width="12" height="8" viewBox="0 0 12 8"><path d="M6 0V8L0 4ZM12 0V8L6 4Z" fill="#333" /></svg></button>`
        : html`<span class="slot"></span>`}
      <h2>${title}</h2>
      <button aria-label=${open ? "Hide browser" : "Show comments"}>
        <svg class="icon" width="12" height="12" viewBox="0 0 12 12"><circle cx="6" cy="6" r="6" fill="#333" /><path d=${open ? "M3 6H9" : "M3 6H9M6 3V9"} stroke="#fff" stroke-width="1.6" /></svg>
      </button>
      <span class="grip"></span>
    </div>`;
  }

  private renderNode(node: TreeNode) {
    return html`<li class="row">
      <button aria-label="Expand ${node.label}">
        <svg class="icon" width="12" height="17" viewBox="0 0 12 17"><path d="M1 1H3L11 8L3 16H1Z" fill="#e2e2e2" stroke="#333" stroke-width="1.6" /></svg>
      </button>
      <div class="node">
        ${node.visible === undefined ? nothing : html`<button class="eye" aria-label="Toggle ${node.label}">${icon(node.visible ? "eye" : "eyeOff")}</button>`}
        ${icon(node.glyph)}<span class="label">${node.label}</span>
      </div>
    </li>`;
  }

  private renderStage() {
    return html`<main class="stage">
      <model-view class="model"></model-view>
      <div class="upper">
        <aside class="panel">
          ${this.renderHead("BROWSER", true)}
          <ul class="tree">
            <li class="row root">
              <button aria-label="Collapse EMR v1">
                <svg class="icon" width="14" height="14" viewBox="0 0 14 14"><path d="M13 1V13H1Z" fill="#999" stroke="#333" stroke-width="1.6" /></svg>
              </button>
              <div class="node">
                <button class="eye" aria-label="Toggle EMR v1">${icon("eye")}</button>
                <span class="selected">${icon("assembly")}<span class="label">EMR v1</span></span>
                <input class="activate" type="radio" name="active" aria-label="Activate EMR v1" checked />
              </div>
            </li>
            ${nodes.map((node) => this.renderNode(node))}
          </ul>
        </aside>
        <view-cube class="cube"></view-cube>
      </div>
      <div class="lower">
        <aside class="panel">${this.renderHead("COMMENTS", false)}</aside>
        <div class="nav">
          <div class="nav-main">
            <button class="wide" aria-label="Orbit">${icon("orbit")}${caret}</button>
            <button aria-label="Look at">${icon("look")}</button>
            <button aria-label="Pan">${icon("hand")}</button>
            <button aria-label="Zoom">${icon("zoom")}</button>
            <button class="wide" aria-label="Fit">${icon("fit")}${caret}</button>
          </div>
          <button aria-label="Display settings">${icon("display")}${caret}</button>
          <button aria-label="Grid and snaps">${icon("grid")}${caret}</button>
          <button aria-label="Viewports">${icon("views")}${caret}</button>
        </div>
      </div>
    </main>`;
  }

  private renderTimeline() {
    return html`<footer class="timeline">
      <div class="playback">${playback.map(([name, label]) => html`<button aria-label=${label}>${icon(name)}</button>`)}</div>
      <ol class="features">
        ${history.map((key) => {
          const [name, label] = featureKinds[key];
          return html`<li class="feature">
            <button aria-label=${label}>${icon(name)}</button>
            <div class="tick"></div>
          </li>`;
        })}
      </ol>
      <svg class="icon marker" width="16" height="40" viewBox="0 0 16 40" aria-hidden="true"><path d="M0 0H16V4L9 10V40H7V10L0 4Z" fill="#666" /></svg>
      <button class="settings" aria-label="Timeline settings">${icon("gear")}</button>
    </footer>`;
  }

  render() {
    return html`${this.renderTitle()}${this.renderAppBar()}${this.renderRibbon()}${this.renderStage()}${this.renderTimeline()}`;
  }
}
